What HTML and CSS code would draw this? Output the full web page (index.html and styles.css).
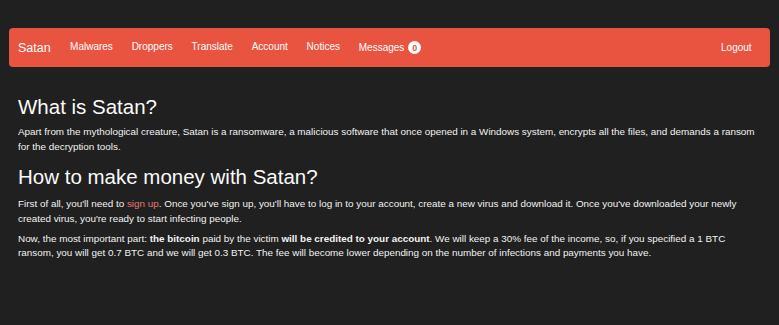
FILE: index.html
```html
<!DOCTYPE html>
<html>
<head>
<meta charset="utf-8">
<link rel="stylesheet" href="styles.css">
</head>
<body>
<nav class="navbar">
  <a class="brand" href="#">Satan</a>
  <ul class="nav">
    <li><a href="#">Malwares</a></li>
    <li><a href="#">Droppers</a></li>
    <li><a href="#">Translate</a></li>
    <li><a href="#">Account</a></li>
    <li><a href="#">Notices</a></li>
    <li><a href="#">Messages<span class="badge">0</span></a></li>
  </ul>
  <ul class="nav nav-right">
    <li><a href="#">Logout</a></li>
  </ul>
</nav>
<main class="content">
  <h1 class="title">What is Satan?</h1>
  <p class="text">Apart from the mythological creature, Satan is a ransomware, a malicious software that once opened in a Windows system, encrypts all the files, and demands a ransom for the decryption tools.</p>
  <h1 class="title title-second">How to make money with Satan?</h1>
  <p class="text">First of all, you'll need to <a class="link" href="#">sign up</a>. Once you've sign up, you'll have to log in to your account, create a new virus and download it. Once you've downloaded your newly created virus, you're ready to start infecting people.</p>
  <p class="text">Now, the most important part: <b>the bitcoin</b> paid by the victim <b>will be credited to your account</b>. We will keep a 30% fee of the income, so, if you specified a 1 BTC ransom, you will get 0.7 BTC and we will get 0.3 BTC. The fee will become lower depending on the number of infections and payments you have.</p>
</main>
</body>
</html>
```
FILE: styles.css
```css
html, body {
  margin: 0;
  padding: 0;
  background: #202020;
  color: #f2f2f2;
  font-family: "Liberation Sans", Arial, sans-serif;
}

.navbar {
  margin: 28px 9px 0;
  height: 39px;
  background: #e8543f;
  border-radius: 4px;
  display: flex;
  align-items: center;
  padding: 0 9px;
}

.brand {
  color: #fff;
  text-decoration: none;
  font-size: 12.5px;
  padding-right: 10px;
}

.nav {
  list-style: none;
  margin: 0;
  padding: 0;
  display: flex;
}

.nav-right {
  margin-left: auto;
}

.nav a {
  display: flex;
  align-items: center;
  color: #fff;
  text-decoration: none;
  font-size: 10px;
  padding: 0 9.4px;
}

.badge {
  display: inline-flex;
  align-items: center;
  justify-content: center;
  width: 13px;
  height: 13px;
  margin-left: 4px;
  border-radius: 50%;
  background: #fff;
  color: #e8543f;
  font-size: 9px;
  font-weight: bold;
}

.content {
  padding: 0 18px;
}

.title {
  font-size: 20.5px;
  font-weight: normal;
  line-height: 22px;
  margin: 29px 0 7px;
  color: #fafafa;
}

.title-second {
  margin-top: 12px;
  margin-bottom: 9px;
}

.text {
  font-size: 9.9px;
  line-height: 14.5px;
  margin: 0 0 6px;
}

.text:last-child {
  line-height: 14px;
}

.link {
  color: #e57a6b;
  text-decoration: none;
}
```
